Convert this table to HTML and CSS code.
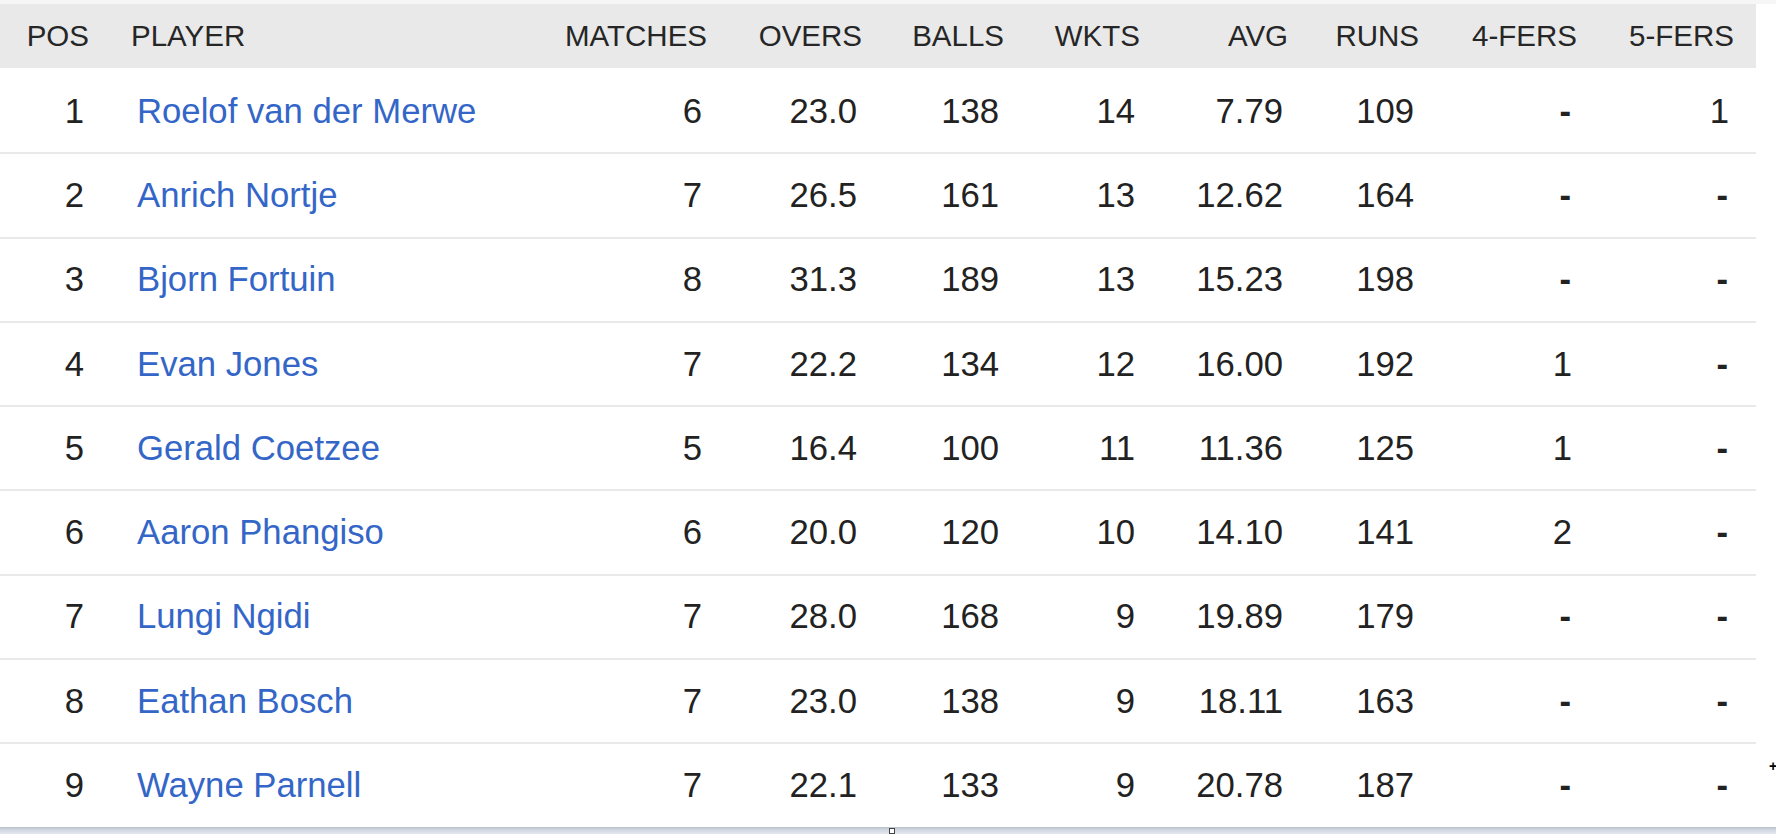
FILE: index.html
```html
<!DOCTYPE html>
<html lang="en">
<head>
<meta charset="utf-8">
<title>Bowling stats</title>
<link rel="stylesheet" href="styles.css">
</head>
<body>
<div class="page">
  <div class="top-strip"></div>
  <div class="stats" role="table">
    <div class="row head" role="row">
      <div class="cell num">POS</div>
      <div class="cell name">PLAYER</div>
      <div class="cell num">MATCHES</div>
      <div class="cell num">OVERS</div>
      <div class="cell num">BALLS</div>
      <div class="cell num">WKTS</div>
      <div class="cell num">AVG</div>
      <div class="cell num">RUNS</div>
      <div class="cell num">4-FERS</div>
      <div class="cell num">5-FERS</div>
    </div>
    <div class="body">
      <div class="row" role="row"><div class="cell num">1</div><div class="cell name"><a href="#">Roelof van der Merwe</a></div><div class="cell num">6</div><div class="cell num">23.0</div><div class="cell num">138</div><div class="cell num">14</div><div class="cell num">7.79</div><div class="cell num">109</div><div class="cell num dash">-</div><div class="cell num">1</div></div>
      <div class="row" role="row"><div class="cell num">2</div><div class="cell name"><a href="#">Anrich Nortje</a></div><div class="cell num">7</div><div class="cell num">26.5</div><div class="cell num">161</div><div class="cell num">13</div><div class="cell num">12.62</div><div class="cell num">164</div><div class="cell num dash">-</div><div class="cell num dash">-</div></div>
      <div class="row" role="row"><div class="cell num">3</div><div class="cell name"><a href="#">Bjorn Fortuin</a></div><div class="cell num">8</div><div class="cell num">31.3</div><div class="cell num">189</div><div class="cell num">13</div><div class="cell num">15.23</div><div class="cell num">198</div><div class="cell num dash">-</div><div class="cell num dash">-</div></div>
      <div class="row" role="row"><div class="cell num">4</div><div class="cell name"><a href="#">Evan Jones</a></div><div class="cell num">7</div><div class="cell num">22.2</div><div class="cell num">134</div><div class="cell num">12</div><div class="cell num">16.00</div><div class="cell num">192</div><div class="cell num">1</div><div class="cell num dash">-</div></div>
      <div class="row" role="row"><div class="cell num">5</div><div class="cell name"><a href="#">Gerald Coetzee</a></div><div class="cell num">5</div><div class="cell num">16.4</div><div class="cell num">100</div><div class="cell num">11</div><div class="cell num">11.36</div><div class="cell num">125</div><div class="cell num">1</div><div class="cell num dash">-</div></div>
      <div class="row" role="row"><div class="cell num">6</div><div class="cell name"><a href="#">Aaron Phangiso</a></div><div class="cell num">6</div><div class="cell num">20.0</div><div class="cell num">120</div><div class="cell num">10</div><div class="cell num">14.10</div><div class="cell num">141</div><div class="cell num">2</div><div class="cell num dash">-</div></div>
      <div class="row" role="row"><div class="cell num">7</div><div class="cell name"><a href="#">Lungi Ngidi</a></div><div class="cell num">7</div><div class="cell num">28.0</div><div class="cell num">168</div><div class="cell num">9</div><div class="cell num">19.89</div><div class="cell num">179</div><div class="cell num dash">-</div><div class="cell num dash">-</div></div>
      <div class="row" role="row"><div class="cell num">8</div><div class="cell name"><a href="#">Eathan Bosch</a></div><div class="cell num">7</div><div class="cell num">23.0</div><div class="cell num">138</div><div class="cell num">9</div><div class="cell num">18.11</div><div class="cell num">163</div><div class="cell num dash">-</div><div class="cell num dash">-</div></div>
      <div class="row last" role="row"><div class="cell num">9</div><div class="cell name"><a href="#">Wayne Parnell</a></div><div class="cell num">7</div><div class="cell num">22.1</div><div class="cell num">133</div><div class="cell num">9</div><div class="cell num">20.78</div><div class="cell num">187</div><div class="cell num dash">-</div><div class="cell num dash">-</div></div>
    </div>
  </div>
  <div class="scroll-edge"><span class="handle"></span></div>
  <span class="cursor">+</span>
</div>
</body>
</html>
```

FILE: styles.css
```css
html, body {
  margin: 0;
  padding: 0;
  background: #ffffff;
}

.page {
  position: relative;
  width: 1776px;
  height: 834px;
  overflow: hidden;
  font-family: "Liberation Sans", Arial, sans-serif;
  color: #222222;
}

.top-strip {
  height: 4px;
  background: #f6f6f6;
}

.stats {
  width: 1756px;
}

.row {
  display: grid;
  grid-template-columns: 111px 289px 329px 155px 142px 136px 148px 131px 158px 157px;
  align-items: center;
  box-sizing: border-box;
  height: 84.3px;
  border-bottom: 2px solid #e9e9e9;
  font-size: 34.7px;
}

.row.last {
  height: 82.3px;
  border-bottom: none;
}

.row.head {
  height: 64px;
  border-bottom: none;
  background: #e9e9e9;
  font-size: 29.5px;
  color: #262626;
}

.body {
  padding-top: 2px;
}

.cell {
  white-space: nowrap;
}

.cell.num {
  text-align: right;
  padding-right: 27px;
}

.cell.dash {
  font-weight: bold;
  padding-right: 28px;
}

.cell.name {
  text-align: left;
  padding-left: 26px;
}

.head .cell.num {
  padding-right: 22px;
}

.head .cell.name {
  padding-left: 20px;
}

.cell a {
  color: #3466c8;
  text-decoration: none;
}

.scroll-edge {
  position: relative;
  height: 7px;
  background: linear-gradient(#b9c1cc, #d3d9e1 45%, #e4e8ee);
}

.handle {
  position: absolute;
  left: 889px;
  top: 1px;
  width: 4px;
  height: 4px;
  border: 1px solid #444;
  background: #fff;
}

.cursor {
  position: absolute;
  left: 1769px;
  top: 759px;
  font-size: 14px;
  font-weight: bold;
  color: #000;
  line-height: 14px;
}
```
